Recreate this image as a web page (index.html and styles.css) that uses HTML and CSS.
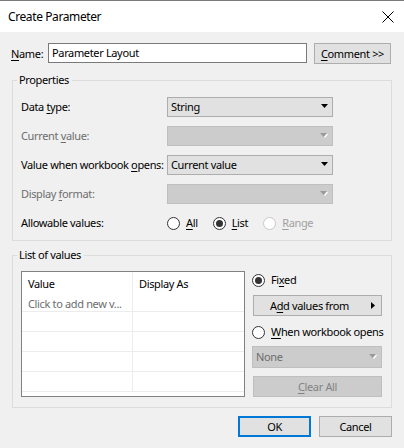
FILE: index.html
```html
<!DOCTYPE html>
<html>
<head>
<meta charset="utf-8">
<link rel="stylesheet" href="styles.css">
</head>
<body>
<div class="window">
  <div class="titlebar">
    <span class="title">Create Parameter</span>
    <svg class="close" width="12" height="12" viewBox="0 0 12 12"><path d="M0.5 0.5 L11.5 11.5 M11.5 0.5 L0.5 11.5" stroke="#000" stroke-width="1" fill="none"/></svg>
  </div>
  <div class="content">
    <div class="name-row">
      <span class="name-label"><u>N</u>ame:</span>
      <div class="textbox">Parameter Layout</div>
      <div class="btn comment"><u>C</u>omment &gt;&gt;</div>
    </div>

    <fieldset class="group props">
      <legend>Properties</legend>
      <div class="prop-grid">
        <span class="lbl">Data <u>t</u>ype:</span>
        <div class="select">
          <span>String</span>
          <svg width="7" height="4" viewBox="0 0 7 4"><path d="M0 0 H7 L3.5 4 Z" fill="#000"/></svg>
        </div>
        <span class="lbl dis">Current <u>v</u>alue:</span>
        <div class="select disabled">
          <span></span>
          <svg width="8" height="5" viewBox="0 0 8 5"><path d="M0 0 H7 L3.5 4 Z" fill="#9a9a9a"/><path d="M4.5 4.5 L7.5 1" stroke="#fff" stroke-width="1.2"/></svg>
        </div>
        <span class="lbl">Value when workbook <u>o</u>pens:</span>
        <div class="select">
          <span>Current value</span>
          <svg width="7" height="4" viewBox="0 0 7 4"><path d="M0 0 H7 L3.5 4 Z" fill="#000"/></svg>
        </div>
        <span class="lbl dis">Display <u>f</u>ormat:</span>
        <div class="select disabled">
          <span></span>
          <svg width="8" height="5" viewBox="0 0 8 5"><path d="M0 0 H7 L3.5 4 Z" fill="#9a9a9a"/><path d="M4.5 4.5 L7.5 1" stroke="#fff" stroke-width="1.2"/></svg>
        </div>
        <span class="lbl">Allowable values:</span>
        <div class="radios">
          <span class="radio"><svg width="13" height="13" viewBox="0 0 13 13"><circle cx="6.5" cy="6.5" r="6" fill="#fff" stroke="#333"/></svg><span><u>A</u>ll</span></span>
          <span class="radio"><svg width="13" height="13" viewBox="0 0 13 13"><circle cx="6.5" cy="6.5" r="6" fill="#fff" stroke="#333"/><circle cx="6.5" cy="6.5" r="3.5" fill="#333"/></svg><span><u>L</u>ist</span></span>
          <span class="radio dis-radio"><svg width="13" height="13" viewBox="0 0 13 13"><circle cx="6.5" cy="6.5" r="6" fill="#fff" stroke="#c8c8c8"/></svg><span><u>R</u>ange</span></span>
        </div>
      </div>
    </fieldset>

    <fieldset class="group values">
      <legend>List of values</legend>
      <div class="values-body">
        <div class="listbox">
          <div class="lrow head"><span class="c1">Value</span><span class="c2">Display As</span></div>
          <div class="lrow"><span class="c1 hint">Click to add new v...</span><span class="c2"></span></div>
          <div class="lrow"><span class="c1"></span><span class="c2"></span></div>
          <div class="lrow"><span class="c1"></span><span class="c2"></span></div>
          <div class="lrow"><span class="c1"></span><span class="c2"></span></div>
          <div class="lrow"><span class="c1"></span><span class="c2"></span></div>
        </div>
        <div class="side">
          <span class="radio fixed"><svg width="13" height="13" viewBox="0 0 13 13"><circle cx="6.5" cy="6.5" r="6" fill="#fff" stroke="#333"/><circle cx="6.5" cy="6.5" r="3.5" fill="#333"/></svg><span>Fi<u>x</u>ed</span></span>
          <div class="btn addvals"><span>A<u>d</u>d values from</span><svg width="4" height="7" viewBox="0 0 4 7"><path d="M0 0 L4 3.5 L0 7 Z" fill="#000"/></svg></div>
          <span class="radio when"><svg width="13" height="13" viewBox="0 0 13 13"><circle cx="6.5" cy="6.5" r="6" fill="#fff" stroke="#333"/></svg><span><u>W</u>hen workbook opens</span></span>
          <div class="select disabled none">
            <span>None</span>
            <svg width="8" height="5" viewBox="0 0 8 5"><path d="M0 0 H7 L3.5 4 Z" fill="#9a9a9a"/><path d="M4.5 4.5 L7.5 1" stroke="#fff" stroke-width="1.2"/></svg>
          </div>
          <div class="btn clear disabled-btn"><span><u>C</u>lear All</span></div>
        </div>
      </div>
    </fieldset>

    <div class="footer">
      <div class="btn ok">OK</div>
      <div class="btn cancel">Cancel</div>
    </div>
  </div>
</div>
</body>
</html>
```

FILE: styles.css
```css
* { box-sizing: border-box; }
html, body { margin: 0; padding: 0; }
body {
  width: 404px;
  height: 448px;
  overflow: hidden;
  background: #f0f0f0;
  font-family: "Noto Sans", "Open Sans", sans-serif;
  font-size: 11px;
  letter-spacing: -0.35px;
  line-height: 16px;
  color: #000;
  white-space: nowrap;
}
u { text-decoration: underline; text-underline-offset: 2px; }

.window {
  height: 448px;
  display: flex;
  flex-direction: column;
  border-top: 1px solid #7a7a7a;
}
.titlebar {
  height: 31px;
  flex: none;
  background: #fff;
  display: flex;
  align-items: center;
  justify-content: space-between;
  padding: 0 10px 0 8px;
}
.title { font-size: 12px; letter-spacing: -0.4px; }
.close { display: block; }

.content {
  flex: 1;
  display: flex;
  flex-direction: column;
  padding: 11px 12px 0 9px;
}

.name-row {
  display: flex;
  align-items: center;
  height: 21px;
}
.name-label { width: 39px; padding-left: 2px; }
.textbox {
  width: 259px;
  height: 20px;
  background: #fff;
  border: 1px solid #7a7a7a;
  padding: 0 3px;
  line-height: 18px;
  align-self: flex-start;
}
.btn {
  height: 21px;
  background: #e1e1e1;
  border: 1px solid #adadad;
  display: flex;
  align-items: center;
  justify-content: center;
}
.comment { width: 77px; margin-left: 7px; }

.group {
  margin: 0 0 0 3px;
  border: 1px solid #dcdcdc;
  padding: 0 8px 7px 8px;
  min-width: 0;
}
.group legend {
  padding: 0 3px 0 2px;
  margin-left: -4px;
  line-height: 16px;
}
.props { margin-top: 8px; }

.prop-grid {
  display: grid;
  grid-template-columns: 146px 166px;
  grid-auto-rows: 20px;
  row-gap: 9px;
  align-items: center;
  padding-top: 9px;
}
.lbl.dis { color: #6d6d6d; }

.select {
  height: 20px;
  background: #e1e1e1;
  border: 1px solid #adadad;
  display: flex;
  align-items: center;
  justify-content: space-between;
  padding: 0 4px 0 3px;
}
.select svg { display: block; margin-top: -2px; }
.select.disabled {
  background: #cccccc;
  border-color: #bfbfbf;
  color: #6d6d6d;
}

.radios { display: flex; align-items: center; }
.radio { display: inline-flex; align-items: center; }
.radio svg { display: block; margin-right: 6px; flex: none; }
.radios .radio { margin-right: 15px; }
.dis-radio { color: #a0a0a0; }

.values { margin-top: 6px; }
.values-body {
  display: flex;
  padding-top: 8px;
  padding-bottom: 3px;
}
.listbox {
  width: 224px;
  height: 126px;
  background: #fff;
  border: 1px solid #828282;
  flex: none;
}
.lrow {
  display: flex;
  height: 20px;
  border-bottom: 1px solid #ececec;
}
.lrow.head { border-bottom: none; }
.lrow span {
  display: block;
  line-height: 19px;
  padding-top: 2px;
  padding-left: 6px;
  white-space: nowrap;
  overflow: hidden;
}
.c1 { width: 111px; border-right: 1px solid #ececec; }
.c2 { flex: 1; }
.hint { color: #6d6d6d; }

.side {
  margin-left: 7px;
  width: 130px;
  display: flex;
  flex-direction: column;
}
.fixed { height: 18px; }
.addvals {
  margin-top: 6px;
  margin-left: 1px;
  justify-content: space-between;
  padding: 0 6px 0 16px;
}
.when { height: 18px; margin-top: 7px; }
.none { height: 22px; margin-top: 5px; }
.clear { margin-top: 8px; margin-left: 1px; }
.disabled-btn {
  background: #cccccc;
  border-color: #bfbfbf;
  color: #838383;
}

.footer {
  display: flex;
  justify-content: flex-end;
  margin-top: 8px;
}
.ok {
  width: 73px;
  border: 2px solid #0078d7;
}
.cancel { width: 73px; margin-left: 8px; }
```
